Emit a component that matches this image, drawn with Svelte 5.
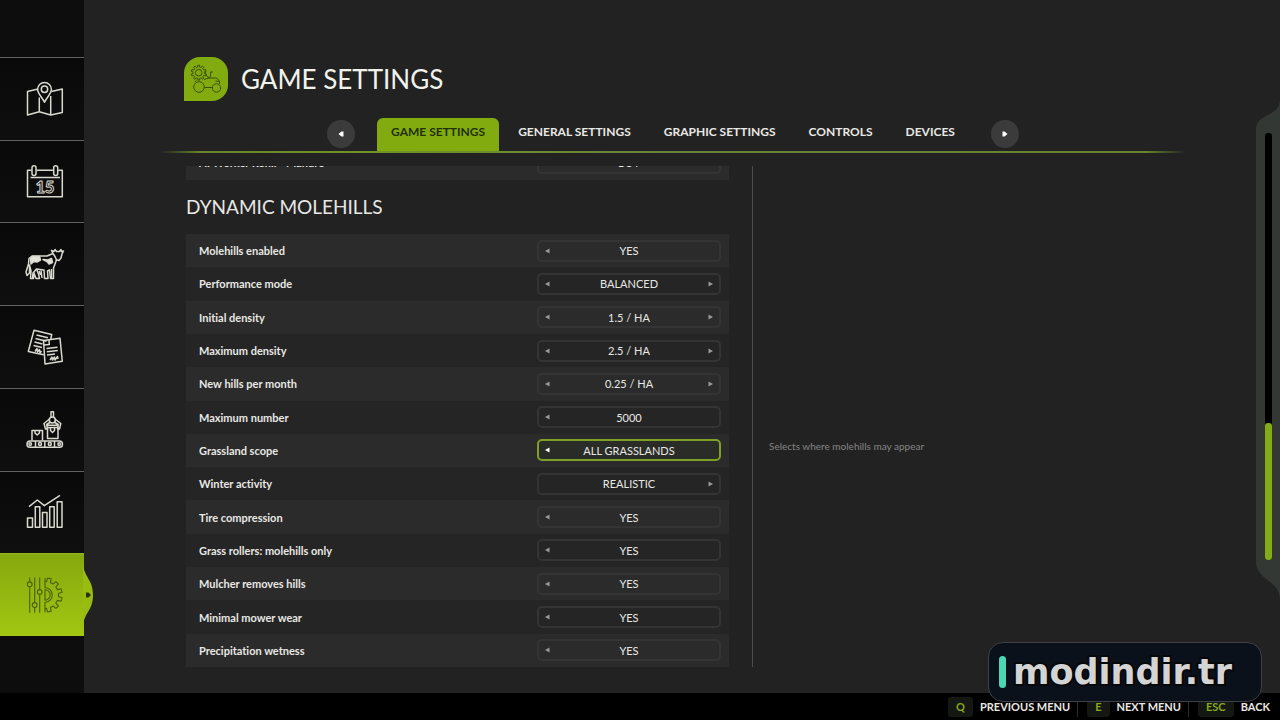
<script>
  const sections = ['map', 'calendar', 'animals', 'contracts', 'production', 'statistics', 'settings'];
  const tabs = ['GAME SETTINGS', 'GENERAL SETTINGS', 'GRAPHIC SETTINGS', 'CONTROLS', 'DEVICES'];
  const settings = [
    { name: 'Molehills enabled', value: 'YES' },
    { name: 'Performance mode', value: 'BALANCED', more: true },
    { name: 'Initial density', value: '1.5 / HA', more: true },
    { name: 'Maximum density', value: '2.5 / HA', more: true },
    { name: 'New hills per month', value: '0.25 / HA', more: true },
    { name: 'Maximum number', value: '5000' },
    { name: 'Grassland scope', value: 'ALL GRASSLANDS', focus: true },
    { name: 'Winter activity', value: 'REALISTIC', more: true, first: true },
    { name: 'Tire compression', value: 'YES' },
    { name: 'Grass rollers: molehills only', value: 'YES' },
    { name: 'Mulcher removes hills', value: 'YES' },
    { name: 'Minimal mower wear', value: 'YES' },
    { name: 'Precipitation wetness', value: 'YES' }
  ];
  const keys = [
    { key: 'Q', text: 'PREVIOUS MENU' },
    { key: 'E', text: 'NEXT MENU' },
    { key: 'ESC', text: 'BACK' }
  ];

  // Outline of a cogwheel, or of a sector of one, starting at angle `start` (radians).
  function cog(cx, cy, inner, outer, teeth, start, count) {
    const step = (Math.PI * 2) / teeth;
    const pts = [];
    for (let i = 0; i < count; i++) {
      const a = start + i * step;
      for (const [f, r] of [[0, inner], [0.22, inner], [0.3, outer], [0.7, outer], [0.78, inner], [1, inner]]) {
        pts.push(`${(cx + r * Math.cos(a + f * step)).toFixed(2)} ${(cy + r * Math.sin(a + f * step)).toFixed(2)}`);
      }
    }
    return 'M' + pts.join('L');
  }
</script>

{#snippet stepper(id, s)}
  <div class="stepper" class:focus={s.focus} role="group" aria-labelledby={id}>
    <button class:off={s.first} aria-label="Previous value"><svg viewBox="0 0 6 6"><path d="M5.5 0.5v5L1 3z" /></svg></button>
    <output>{s.value}</output>
    <button class:off={!s.more} aria-label="Next value"><svg viewBox="0 0 6 6"><path d="M0.5 0.5v5L5 3z" /></svg></button>
  </div>
{/snippet}

{#snippet icon(name)}
  <svg class="icon" viewBox="0 0 40 40" aria-hidden="true">
    {#if name === 'map'}
      <path d="M13 10 2.5 12.5V36L14.3 32.7 25.7 36 37.3 33.5V10L26.5 12.5M14.3 18.5v14.2M25.7 17v19" />
      <path d="M19.5 23.3C17.5 18.5 12.6 15 12.6 10.3a6.9 6.9 0 0 1 13.8 0c0 4.7-4.9 8.2-6.9 13z" />
      <circle cx="19.5" cy="10.3" r="3.2" />
    {:else if name === 'calendar'}
      <path d="M6.5 8.2H2.5V34.7H37.3V8.2H33.2M28.2 8.2H11.5M5.5 15.5h29.5" />
      <rect x="7" y="3.8" width="4" height="9.8" rx="2" />
      <rect x="28.7" y="3.8" width="4" height="9.8" rx="2" />
      <text x="20" y="30.5">15</text>
    {:else if name === 'animals'}
      <path d="M28 9.5 26.5 6.5 29 7.5 30 5.5 31.5 7.5H34.5L36 5.5 36.5 7.5 38.5 7 37 9.8 36 14 34 16.5 31.5 15.8C30.5 19 29.5 21.5 28.5 24V34.500H25.5L24.5 26 22.5 27 23 34.500H19.5L19 26C16.5 25.5 14 25.3 11.5 25L13.5 30 14.5 34.500H11L9 29 8.5 34.500H5.5L6 27 4.5 21 4.5 29 2 31.5 1 28 3.5 20 4 14.5 7 12H22z" />
      <path class="solid" d="M7.5 12.5H14.5L15.5 16 12 18 9 17.5 6 20 5.5 14.5zM18 15.5 23 16 26.5 14.5 27.5 18.5 24 20 22 17.5z" />
      <path d="M11.5 25 8 29 7.5 34M16 26.5 17 34M14 27l1.5 4M26.5 25v9M28 9.5l2 3 1.5 3.3" />
    {:else if name === 'contracts'}
      <path d="M18.5 27.8 3.3 24.5 9 3.2 26.7 7.5 25.8 12M18.5 13.5 20 37 37.3 34.3 35 11.3 24 12.8zM24 12.8 24.3 17.5 18.8 18" />
      <path d="M11.5 8l11.5 2.8M10.5 11.5l11 2.7M9.5 15l8 2M8.5 18.5l8.500 2M21.5 21.5l11-1.3M21.8 24.8l11-1.3M22 28l8-1M10 24.5l2-3 .5 3.5 2-2.5 .5 3.5 1.5-2M25 33l2-3 .5 3 2-3 .5 3 2.5-3.5 .5 2.5" />
    {:else if name === 'production'}
      <rect x="2" y="31" width="35.5" height="6.3" rx="3.1" />
      <circle cx="5.2" cy="34.1" r="1.3" /><circle cx="15" cy="34.1" r="1.5" /><circle cx="24.8" cy="34.1" r="1.5" /><circle cx="34.2" cy="34.1" r="1.3" />
      <path d="M10.5 31v6M19.8 31v6M29.5 31v6M7 30.5V20.5H17.5V30.5M10 20.5v2.5l2.2 2 2.2-2V20.5M22.5 17.5H33V28.5H22.5zM25.5 17.5v3l2 2 2-2v-3M26 7V1.8h2.5V7" />
      <circle cx="27.3" cy="10" r="3" />
      <path d="M24.5 9 19 13.5 20.5 19H22.5L21.7 14.5 25.5 12M30 9l5.8 4.5L34.5 19H32.8L33.2 14.5 29 12M22 15.3H33" />
    {:else if name === 'statistics'}
      <path d="M2.5 26H7.5V35.3H2.5zM10.3 14.8H14.8V35.3H10.3zM17.5 20.5H22V35.3H17.5zM24.7 14.8H29.2V35.3H24.7zM32.2 9.8H37V35.3H32.2zM4 14.7 12.3 8 19.3 13.7 35 3.3" />
    {:else}
      <path d="M4.7 2.5v4.5M4.7 11.8v26M9.7 2.5v25.2M9.7 32.4v5.4M14.7 2.5v12.2M14.7 19.3v18.5" />
      <circle cx="4.7" cy="9.3" r="2.4" /><circle cx="9.7" cy="30" r="2.4" /><circle cx="14.7" cy="17" r="2.4" />
      <path d={cog(20, 20, 13.5, 17.3, 12, -Math.PI / 2, 6)} />
      <path d="M20 2.7v10a7.3 7.3 0 0 1 0 14.6v10M20 14.8a5.2 5.2 0 0 1 0 10.4z" />
    {/if}
  </svg>
{/snippet}

<div class="screen">
  <div class="body">
    <nav class="sidebar" aria-label="Menu">
      {#each sections as name}
        <button class="section" class:active={name === 'settings'} aria-label={name}>
          {@render icon(name)}
          {#if name === 'settings'}
            <svg class="bulge" viewBox="0 0 10 64" aria-hidden="true">
              <path d="M0 0C1 15 10 16 10 32S1 49 0 64z" fill="#98bc11" />
              <path d="M3 29.5h2.5L8 32 5.5 34.5H3z" fill="#28330c" />
            </svg>
          {/if}
        </button>
      {/each}
    </nav>

    <main>
      <header>
        <span class="badge">
          <svg viewBox="0 0 44 44" aria-hidden="true">
            <path d={cog(14.7, 15.7, 5.7, 7.5, 10, 0, 10)} />
            <circle cx="14.7" cy="15.7" r="3.3" />
            <circle cx="15" cy="30" r="5.3" /><circle cx="32.5" cy="31" r="4.2" />
            <path d="M12 23.5 11 25M20.5 30.5H28M21 14.5l2 5 3 1.5M26.5 15v4l-1 2M26.5 15H29M20 22.5 25 21H32.5L35.5 24V27M35.5 24.5l-4-.5" />
          </svg>
        </span>
        <h1>GAME SETTINGS</h1>
      </header>

      <nav class="tabs" aria-label="Settings pages">
        <button class="round" aria-label="Previous page"><svg viewBox="0 0 6 6"><path d="M5.5 0.5v5H3.5L0.5 3 3.5 0.5z" /></svg></button>
        <div class="tablist">
          {#each tabs as tab, i}
            <button class="tab" class:current={i === 0}>{tab}</button>
          {/each}
        </div>
        <button class="round" aria-label="Next page"><svg viewBox="0 0 6 6"><path d="M0.5 0.5v5H2.5L5.5 3 2.5 0.5z" /></svg></button>
      </nav>

      <div class="content">
        <section class="list">
          <div class="clipped">
            <div class="row">
              <span class="name" id="refill">AI Worker Refill - Manure</span>
              {@render stepper('refill', { value: 'BUY', first: true })}
            </div>
          </div>
          <h2>DYNAMIC MOLEHILLS</h2>
          <div class="rows">
            {#each settings as s, i}
              <div class="row">
                <span class="name" id={`setting-${i}`}>{s.name}</span>
                {@render stepper(`setting-${i}`, s)}
              </div>
            {/each}
          </div>
        </section>
        <p class="help">Selects where molehills may appear</p>
      </div>
    </main>

    <aside class="scroll">
      <svg class="cap" viewBox="0 0 24 30" aria-hidden="true"><path d="M24 0C23 18 0 12 0 30H24z" /></svg>
      <div class="rail"><div class="track"><div class="thumb" style="height: 32%"></div></div></div>
      <svg class="cap" viewBox="0 0 24 40" aria-hidden="true"><path d="M0 0C0 22 23 18 24 40V0z" /></svg>
    </aside>
  </div>

  <footer>
    {#each keys as k}
      <button class="hint"><kbd>{k.key}</kbd><span>{k.text}</span></button>
    {/each}
  </footer>

  <div class="mark"><i></i><span>modindir.tr</span></div>
</div>

<style>
  :global(body) { background: #222; }
  .screen {
    position: relative;
    display: flex;
    flex-direction: column;
    min-height: 100vh;
    background: #222;
    color: #e8e8e4;
    font-family: Lato, 'Open Sans', sans-serif;
    font-size: 11px;
    font-variant-ligatures: none;
    overflow: hidden;
  }
  button { border: 0; padding: 0; background: none; color: inherit; font: inherit; cursor: pointer; }
  .body { flex: 1; display: flex; }

  .sidebar {
    flex: none;
    width: 84px;
    display: grid;
    grid-template-rows: repeat(7, 1fr);
    padding: 57px 0;
    box-sizing: border-box;
    background: #0d0d0d;
  }
  .section {
    position: relative;
    display: flex;
    align-items: center;
    justify-content: center;
    padding-left: 6px;
    border-top: 1px solid #626262;
    background: linear-gradient(#090909, #0f0f0f);
  }
  .section.active { border-color: #93b51c; background: linear-gradient(#86a80f, #a3c712); }
  .icon { width: 40px; height: 40px; fill: none; stroke: #d9d9d0; stroke-width: 1.5; stroke-linejoin: round; }
  .icon text { font: 900 16px Lato, sans-serif; text-anchor: middle; stroke-width: 1; }
  .icon .solid { fill: #e4e4da; }
  .active .icon { stroke: #49600c; stroke-width: 1.1; }
  .bulge { position: absolute; left: 100%; top: 50%; width: 10px; height: 64px; margin: -32px 0 0 -1px; }

  main { flex: 1; min-width: 0; display: flex; flex-direction: column; }
  header { display: flex; align-items: center; gap: 13px; padding: 57px 0 0 100px; }
  .badge { width: 44px; height: 44px; border-radius: 16px 16px 16px 0; background: #82ab10; }
  .badge svg { display: block; fill: none; stroke: #3c5208; stroke-width: 1; }
  h1 { margin: 0; font-size: 26px; line-height: 44px; font-weight: 400; color: #f2f2ec; }

  .tabs {
    display: flex;
    justify-content: center;
    gap: 22px;
    height: 33px;
    margin: 17px 70px 0 76px;
    border-bottom: 2px solid;
    border-image: linear-gradient(90deg, transparent, #67852b 4%, #6f9424 20%, #66843a 50%, #67852b 96%, transparent) 1;
  }
  .round {
    display: grid;
    place-items: center;
    width: 28px;
    height: 28px;
    margin-top: 2px;
    border-radius: 50%;
    background: #3b3b3b;
  }
  .round svg { width: 6px; height: 6px; fill: #fff; }
  .tablist { display: flex; gap: 5px; }
  .tab { padding: 0 14px 6px; border-radius: 6px 6px 0 0; font-size: 12px; font-weight: 700; white-space: nowrap; }
  .tab.current { background: #82ab10; color: #22300a; }

  .content {
    flex: 1;
    display: grid;
    grid-template-columns: minmax(0, 567fr) minmax(0, 503fr);
    margin: 13px 0 26px 102px;
  }
  .list { display: flex; flex-direction: column; padding-right: 23px; border-right: 1px solid #4c4c4c; }
  .clipped { height: 14px; display: flex; flex-direction: column; justify-content: flex-end; overflow: hidden; }
  .clipped .row { flex: none; height: 35px; }
  h2 { margin: 0; font-size: 19px; line-height: 54px; font-weight: 400; }
  .rows { flex: 1; display: grid; grid-auto-rows: 1fr; }
  .row {
    display: flex;
    align-items: center;
    justify-content: space-between;
    padding: 0 8px 0 13px;
    background: #2b2b2b;
  }
  .row:nth-child(even) { background: #252525; }
  .name { font-weight: 700; }
  .stepper {
    display: flex;
    align-items: center;
    flex: none;
    width: 184px;
    height: 22px;
    box-sizing: border-box;
    border: 2px solid #343434;
    border-radius: 5px;
  }
  .stepper output { flex: 1; text-align: center; }
  .stepper button { display: grid; place-items: center; width: 16px; height: 18px; }
  .stepper button svg { width: 6px; height: 6px; fill: #999; }
  .stepper button.off { visibility: hidden; }
  .stepper.focus { border-color: #7f9f27; background: #2a2d27; }
  .stepper.focus svg { fill: #fff; }
  .help { align-self: center; margin: 0; padding: 58px 16px 0; font-size: 10px; color: #858585; }

  .scroll { flex: none; width: 24px; display: flex; flex-direction: column; padding: 100px 0 93px; }
  .cap { display: block; width: 24px; fill: #343835; }
  .rail { flex: 1; display: flex; padding: 3px 0 0 9px; background: #343835; }
  .track { display: flex; flex-direction: column; justify-content: flex-end; width: 7px; border-radius: 3px; background: #000; }
  .thumb { border-radius: 3px; background: #84ad15; }

  footer { display: flex; align-items: center; justify-content: flex-end; height: 27px; padding-right: 10px; background: #000; }
  .hint { display: flex; align-items: center; gap: 7px; font-weight: 700; }
  .hint + .hint { margin-left: 7px; padding-left: 9px; border-left: 1px solid #2b2b2b; }
  kbd { padding: 0 8px; border-radius: 3px; background: #141712; color: #85a81c; font: inherit; line-height: 20px; }

  .mark {
    position: absolute;
    right: 18px;
    bottom: 18px;
    display: flex;
    align-items: center;
    gap: 7px;
    padding: 0 29px 0 10px;
    height: 58px;
    border: 1px solid #3e4146;
    border-radius: 15px;
    background: #0b111a;
    color: #d4d4d4;
    font: 700 35px 'DejaVu Sans', sans-serif;
    paint-order: stroke fill;
    -webkit-text-stroke: 4px #06080b;
  }
  .mark i { width: 7px; height: 32px; border-radius: 4px; background: #4bd6b5; }
</style>
